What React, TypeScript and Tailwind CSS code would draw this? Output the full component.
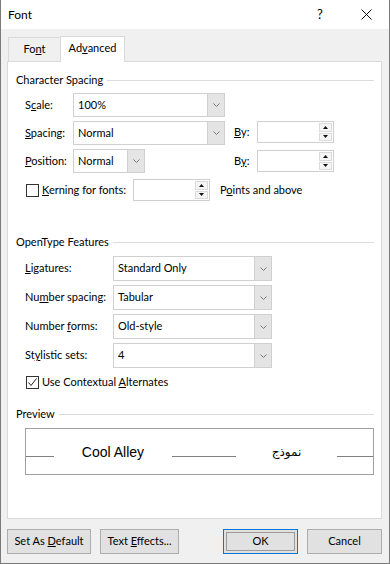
import React from 'react';

const Chevron = () => (
  <svg width="7" height="4" viewBox="0 0 7 4">
    <path d="M0.5 0.5 L3.5 3.5 L6.5 0.5" fill="none" stroke="#7a7a7a" strokeWidth="1" />
  </svg>
);

const Combo = ({ value, w }: { value: string; w: string }) => (
  <div className={`flex h-full ${w} border border-[#d0d0d0] bg-white`}>
    <div className="flex flex-1 items-center pl-[4px]">{value}</div>
    <div className="flex w-[17px] items-center justify-center border-l border-[#d0d0d0] bg-[#e4e4e4]">
      <Chevron />
    </div>
  </div>
);

const Tri = ({ up }: { up?: boolean }) => (
  <svg width="5" height="3" viewBox="0 0 5 3">
    <path d={up ? 'M0 3 L2.5 0 L5 3 Z' : 'M0 0 L2.5 3 L5 0 Z'} fill="#111" />
  </svg>
);

const Spin = () => (
  <div className="flex h-[22px] w-[77px] border border-[#cfcfcf] bg-white">
    <div className="flex-1" />
    <div className="flex w-[15px] flex-col gap-px p-px">
      <div className="flex flex-1 items-center justify-center border border-[#dadada] bg-[#f5f5f5]">
        <Tri up />
      </div>
      <div className="flex flex-1 items-center justify-center border border-[#dadada] bg-[#f5f5f5]">
        <Tri />
      </div>
    </div>
  </div>
);

const Check = ({ checked }: { checked?: boolean }) => (
  <div className="flex h-[13px] w-[13px] items-center justify-center border border-[#333] bg-white">
    {checked && (
      <svg width="11" height="11" viewBox="0 0 11 11">
        <path d="M1.5 5.5 L4 8.5 L9.5 1.5" fill="none" stroke="#222" strokeWidth="1" />
      </svg>
    )}
  </div>
);

const GroupHeader = ({ title }: { title: string }) => (
  <div className="flex h-[14px] items-center pl-[8px] pr-[7px]">
    <span>{title}</span>
    <div className="ml-[4px] h-px flex-1 bg-[#dcdcdc]" />
  </div>
);

const Btn = ({ children, w, primary }: { children: React.ReactNode; w: string; primary?: boolean }) => (
  <div
    className={`flex h-[25px] ${w} border ${primary ? 'border-[#0078d7] p-[2px]' : 'border-[#adadad]'} bg-[#e1e1e1]`}
  >
    <div className={`flex flex-1 items-center justify-center ${primary ? 'border border-[#9a9a9a]' : ''}`}>{children}</div>
  </div>
);

export default function App() {
  return (
    <div className="flex h-[564px] w-[390px] flex-col overflow-hidden border-x border-b border-[#7a7a7a] font-['Lato',sans-serif] text-[11px] text-black">
      {/* title bar */}
      <div className="flex h-[29px] shrink-0 items-center bg-white">
        <span className="pl-[7px] text-[12px]">Font</span>
        <span className="ml-auto flex w-[46px] justify-center text-[13px]">?</span>
        <span className="flex w-[46px] justify-center">
          <svg width="11" height="11" viewBox="0 0 11 11">
            <path d="M0.5 0.5 L10.5 10.5 M10.5 0.5 L0.5 10.5" stroke="#111" strokeWidth="1" />
          </svg>
        </span>
      </div>

      <div className="flex flex-1 flex-col bg-[#f0f0f0] pl-[6px] pr-[7px] pt-[7px]">
        {/* tabs */}
        <div className="relative z-10 -mb-px flex h-[26px] shrink-0 items-start pl-px">
          <div className="mt-px flex h-[24px] w-[52px] items-center justify-center border-l border-t border-[#d9d9d9]">
            <span>
              Fo<u>n</u>t
            </span>
          </div>
          <div className="flex h-[26px] w-[65px] items-center justify-center border-x border-t border-[#d9d9d9] bg-white pb-[2px]">
            <span>
              Ad<u>v</u>anced
            </span>
          </div>
        </div>

        {/* panel */}
        <div className="flex h-[458px] shrink-0 flex-col border border-[#dadada] bg-white">
          <div className="mt-[11px]">
            <GroupHeader title="Character Spacing" />
          </div>

          <div className="mt-[6px] flex h-[24px] items-center pl-[17px]">
            <span className="w-[48px]">
              S<u>c</u>ale:
            </span>
            <Combo value="100%" w="w-[152px]" />
          </div>

          <div className="mt-[4px] flex h-[24px] items-start pl-[17px]">
            <span className="flex h-[24px] w-[48px] items-center">
              <span>
                <u>S</u>pacing:
              </span>
            </span>
            <div className="h-[24px] w-[161px]">
              <Combo value="Normal" w="w-[152px]" />
            </div>
            <span className="flex h-[22px] w-[23px] items-center">
              <span>
                <u>B</u>y:
              </span>
            </span>
            <Spin />
          </div>

          <div className="mt-[4px] flex h-[24px] items-start pl-[17px]">
            <span className="flex h-[24px] w-[48px] items-center">
              <span>
                <u>P</u>osition:
              </span>
            </span>
            <div className="h-[24px] w-[161px]">
              <Combo value="Normal" w="w-[72px]" />
            </div>
            <span className="flex h-[23px] w-[23px] items-center pt-px">
              <span>
                B<u>y</u>:
              </span>
            </span>
            <div className="pt-px">
              <Spin />
            </div>
          </div>

          <div className="mt-[6px] flex h-[22px] items-center pl-[17px]">
            <div className="flex w-[108px] items-center">
              <div className="ml-px">
                <Check />
              </div>
              <span className="ml-[3px]">
                <u>K</u>erning for fonts:
              </span>
            </div>
            <Spin />
            <span className="ml-[10px]">
              P<u>o</u>ints and above
            </span>
          </div>

          <div className="mt-[34px]">
            <GroupHeader title="OpenType Features" />
          </div>

          {[
            { label: <><u>L</u>igatures:</>, value: 'Standard Only', mt: 'mt-[7px]' },
            { label: <>Nu<u>m</u>ber spacing:</>, value: 'Tabular', mt: 'mt-[4px]' },
            { label: <>Number <u>f</u>orms:</>, value: 'Old-style', mt: 'mt-[4px]' },
            { label: <>St<u>y</u>listic sets:</>, value: '4', mt: 'mt-[4px]' },
          ].map((r, i) => (
            <div key={i} className={`${r.mt} flex h-[25px] items-center pl-[17px]`}>
              <span className="w-[88px]">{r.label}</span>
              <Combo value={r.value} w="w-[159px]" />
            </div>
          ))}

          <div className="mt-[7px] flex h-[14px] items-center pl-[18px]">
            <Check checked />
            <span className="ml-[3px]">
              Use Contextual <u>A</u>lternates
            </span>
          </div>

          <div className="mt-[18px]">
            <GroupHeader title="Preview" />
          </div>

          <div className="ml-[17px] mr-[7px] mt-[7px] h-[47px] border border-[#a0a0a0]">
            <div className="flex h-[28px] items-end">
              <div className="h-px w-[28px] bg-[#808080]" />
              <div className="-mb-[3px] w-[118px] text-center font-['Liberation_Sans',Arial,sans-serif] text-[14px] leading-[16px]">
                Cool Alley
              </div>
              <div className="h-px w-[64px] bg-[#808080]" />
              <div className="-mb-[3px] w-[101px] text-center font-['DejaVu_Sans',sans-serif] text-[12px] leading-[16px]">
                نموذج
              </div>
              <div className="h-px flex-1 bg-[#808080]" />
            </div>
          </div>
        </div>

        {/* buttons */}
        <div className="mt-[10px] flex shrink-0 items-center">
          <Btn w="w-[84px]">
            <span>
              Set As <u>D</u>efault
            </span>
          </Btn>
          <div className="ml-[9px]">
            <Btn w="w-[79px]">
              <span>
                Text <u>E</u>ffects...
              </span>
            </Btn>
          </div>
          <div className="ml-auto flex gap-[9px]">
            <Btn w="w-[75px]" primary>
              OK
            </Btn>
            <Btn w="w-[75px]">Cancel</Btn>
          </div>
        </div>
      </div>
    </div>
  );
}
